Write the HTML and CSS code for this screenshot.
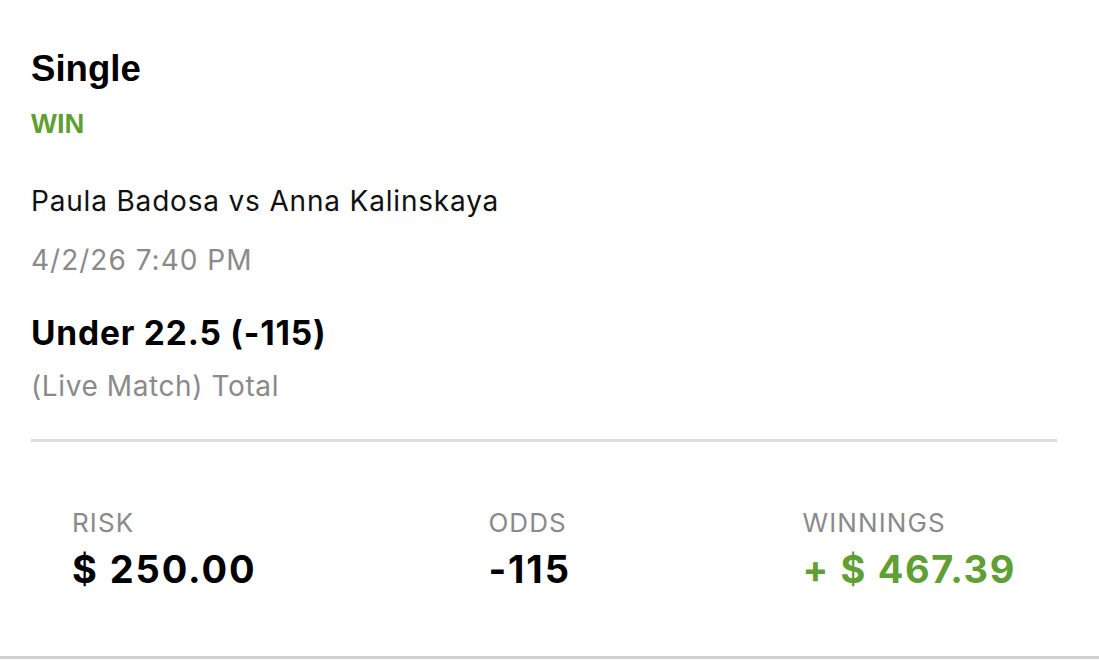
FILE: index.html
```html
<!DOCTYPE html>
<html lang="en">
<head>
<meta charset="utf-8">
<title>Bet slip</title>
<link rel="stylesheet" href="styles.css">
</head>
<body>
<div class="card">
  <div class="content">
    <h1 class="title">Single</h1>
    <div class="status">WIN</div>
    <div class="match">Paula Badosa vs Anna Kalinskaya</div>
    <div class="date">4/2/26 7:40 PM</div>
    <div class="pick">Under 22.5 (-115)</div>
    <div class="market">(Live Match) Total</div>
    <div class="divider"></div>
    <div class="stats">
      <div class="stat">
        <div class="stat-label">RISK</div>
        <div class="stat-value">$ 250.00</div>
      </div>
      <div class="stat">
        <div class="stat-label">ODDS</div>
        <div class="stat-value">-115</div>
      </div>
      <div class="stat">
        <div class="stat-label">WINNINGS</div>
        <div class="stat-value stat-value--win">+ $ 467.39</div>
      </div>
    </div>
  </div>
</div>
</body>
</html>
```
FILE: styles.css
```css
html, body {
  margin: 0;
  padding: 0;
  background: #ffffff;
}

body {
  font-family: Inter, "Liberation Sans", sans-serif;
  color: #000;
}

.card {
  border-bottom: 3px solid #d2d2d2;
  background: #fff;
}

.content {
  display: flex;
  flex-direction: column;
  padding: 51.2px 42px 67.8px 31px;
}

.title {
  margin: 0;
  font-family: "Liberation Sans", Arial, sans-serif;
  font-weight: 700;
  font-size: 36.6px;
  line-height: 1;
  color: #000;
}

.status {
  margin-top: 21.9px;
  font-family: "Liberation Sans", Arial, sans-serif;
  font-weight: 700;
  font-size: 27.5px;
  line-height: 1;
  color: #5f9f33;
}

.match,
.date,
.market {
  font-size: 28px;
  line-height: 1;
  font-weight: 400;
}

.match {
  margin-top: 49.6px;
  letter-spacing: 0.82px;
  color: #111;
}

.date {
  margin-top: 31.5px;
  letter-spacing: 1px;
  color: #8a8a8a;
}

.pick {
  margin-top: 42.8px;
  font-size: 33.5px;
  font-weight: 700;
  line-height: 1;
  letter-spacing: 0.8px;
  color: #000;
}

.market {
  margin-top: 21.2px;
  letter-spacing: 0.6px;
  color: #8a8a8a;
}

.divider {
  margin-top: 39.2px;
  height: 3px;
  background: #dcdcdc;
}

.stats {
  margin-top: 68.5px;
  padding: 0 41px;
  display: flex;
  justify-content: space-between;
}

.stat {
  display: flex;
  flex-direction: column;
  gap: 13.7px;
}

.stat-label {
  font-size: 26px;
  line-height: 1;
  letter-spacing: 1.1px;
  color: #8a8a8a;
}

.stat-value {
  font-size: 38px;
  font-weight: 700;
  line-height: 1;
  letter-spacing: 1.9px;
  color: #000;
}

.stat-value--win {
  color: #5f9f33;
  letter-spacing: 1.6px;
}
```
